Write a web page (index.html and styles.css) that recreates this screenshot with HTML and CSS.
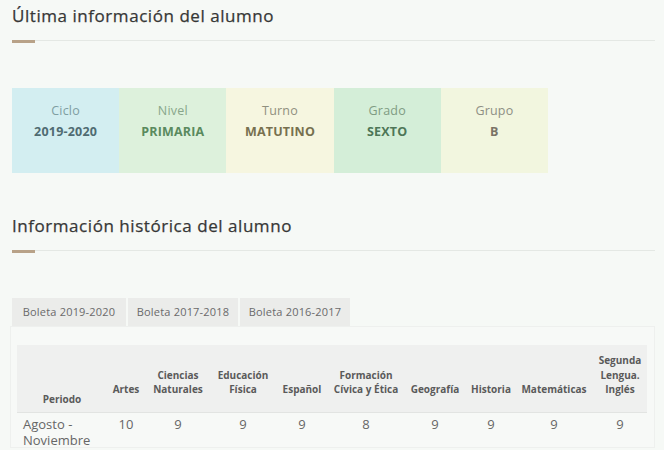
FILE: index.html
```html
<!DOCTYPE html>
<html lang="es">
<head>
<meta charset="utf-8">
<link rel="stylesheet" href="styles.css">
</head>
<body>
<div class="page">
  <section class="sec sec-last">
    <h2 class="title">Última información del alumno</h2>
    <div class="rule"><span class="accent"></span></div>
    <div class="cards">
      <div class="card c-ciclo"><div class="lbl">Ciclo</div><div class="val">2019-2020</div></div>
      <div class="card c-nivel"><div class="lbl">Nivel</div><div class="val">PRIMARIA</div></div>
      <div class="card c-turno"><div class="lbl">Turno</div><div class="val">MATUTINO</div></div>
      <div class="card c-grado"><div class="lbl">Grado</div><div class="val">SEXTO</div></div>
      <div class="card c-grupo"><div class="lbl">Grupo</div><div class="val">B</div></div>
    </div>
  </section>
  <section class="sec sec-hist">
    <h2 class="title">Información histórica del alumno</h2>
    <div class="rule"><span class="accent"></span></div>
    <div class="tabs">
      <div class="tab t1">Boleta 2019-2020</div>
      <div class="tab">Boleta 2017-2018</div>
      <div class="tab">Boleta 2016-2017</div>
    </div>
    <div class="panel">
      <table class="grades">
        <thead>
          <tr>
            <th class="c-per">Periodo</th>
            <th class="c-art">Artes</th>
            <th class="c-cn">Ciencias<br>Naturales</th>
            <th class="c-ef">Educación<br>Física</th>
            <th class="c-es">Español</th>
            <th class="c-fc">Formación<br>Cívica y Ética</th>
            <th class="c-geo">Geografía</th>
            <th class="c-his">Historia</th>
            <th class="c-mat">Matemáticas</th>
            <th class="c-sl">Segunda<br>Lengua.<br>Inglés</th>
          </tr>
        </thead>
        <tbody>
          <tr>
            <td class="per">Agosto -<br>Noviembre</td>
            <td>10</td><td>9</td><td>9</td><td>9</td><td>8</td><td>9</td><td>9</td><td>9</td><td>9</td>
          </tr>
        </tbody>
      </table>
    </div>
  </section>
</div>
</body>
</html>
```
FILE: styles.css
```css
html, body {
  margin: 0;
  padding: 0;
  background: #f6f9f6;
}
body {
  font-family: "Open Sans", "Liberation Sans", sans-serif;
  color: #3c3c3c;
  overflow: hidden;
  height: 450px;
}
.page {
  padding: 0 9px 0 12px;
}
.title {
  margin: 0;
  padding-top: 4px;
  font-size: 17px;
  font-weight: 500;
  line-height: 24px;
  color: #363736;
  letter-spacing: 0.55px;
  -webkit-text-stroke: 0.25px #363736;
}
.rule {
  position: relative;
  margin-top: 12px;
  height: 1px;
  background: #e4e8e4;
}
.accent {
  position: absolute;
  left: 0;
  top: 0;
  width: 23px;
  height: 3px;
  background: #b8a288;
}
.cards {
  display: flex;
  margin-top: 47px;
  width: 536px;
  height: 85px;
}
.card {
  flex: 1;
  display: flex;
  flex-direction: column;
  align-items: center;
  padding-top: 14px;
  box-sizing: border-box;
}
.lbl {
  font-size: 12.5px;
  line-height: 18px;
  letter-spacing: 0.2px;
}
.val {
  margin-top: 3px;
  font-size: 12.5px;
  font-weight: 700;
  line-height: 18px;
  letter-spacing: 0.2px;
}
.c-ciclo { background: #d3eef1; }
.c-ciclo .lbl { color: #7f9ea2; }
.c-ciclo .val { color: #4f6b72; }
.c-nivel { background: #ddf1dc; }
.c-nivel .lbl { color: #88a68a; }
.c-nivel .val { color: #5a8a5e; }
.c-turno { background: #f6f6e0; }
.c-turno .lbl { color: #8f907e; }
.c-turno .val { color: #77704f; }
.c-grado { background: #d4eed8; }
.c-grado .lbl { color: #7f9c83; }
.c-grado .val { color: #4e7657; }
.c-grupo { background: #f2f6df; }
.c-grupo .lbl { color: #8e8f84; }
.c-grupo .val { color: #7a7366; }

.sec-hist {
  margin-top: 37px;
}
.tabs {
  display: flex;
  gap: 2px;
  margin-top: 47px;
}
.tab {
  box-sizing: border-box;
  background: #ebecea;
  color: #6a6a6a;
  font-size: 11px;
  line-height: 28px;
  width: 110px;
  text-align: center;
  letter-spacing: 0.2px;
}
.tab.t1 { width: 114px; }
.panel {
  box-sizing: border-box;
  margin-left: -2px;
  border: 1px solid #eef0ee;
  background: #f7f9f7;
  padding: 18px 8px 0 8px;
  height: 122px;
  overflow: hidden;
}
.grades {
  border-collapse: collapse;
  table-layout: fixed;
  width: 630px;
  margin-left: -2px;
}
.grades thead tr {
  background: #eff0ef;
}
.grades th {
  font-size: 10px;
  font-weight: 700;
  color: #5a5a5a;
  line-height: 14.5px;
  vertical-align: bottom;
  padding: 8px 0 15px;
  text-align: center;
  border-bottom: 1px solid #e2e4e2;
}
.grades th.c-per {
  padding-bottom: 5px;
}
.grades td {
  font-size: 13px;
  color: #666;
  text-align: center;
  vertical-align: top;
  padding: 3px 0 0;
  line-height: 16.5px;
}
.grades td.per {
  text-align: left;
  padding-left: 6px;
}
.c-per { width: 90px; }
.c-art { width: 38px; }
.c-cn { width: 66px; }
.c-ef { width: 64px; }
.c-es { width: 54px; }
.c-fc { width: 74px; }
.c-geo { width: 64px; }
.c-his { width: 48px; }
.c-mat { width: 78px; }
.c-sl { width: 54px; }
```
